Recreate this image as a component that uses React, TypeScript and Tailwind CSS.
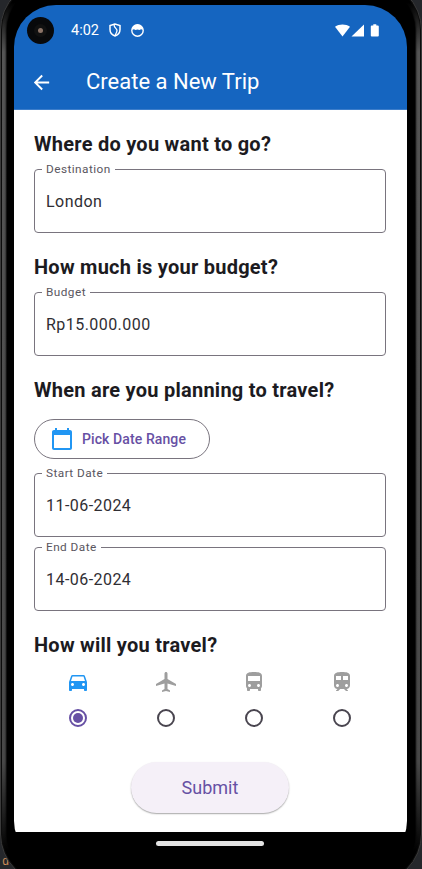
import React from "react";
import {
  MdArrowBack,
  MdCalendarToday,
  MdDirectionsBus,
  MdDirectionsCar,
  MdLocalAirport,
  MdTrain,
} from "react-icons/md";

function Heading({ children }: { children: React.ReactNode }) {
  return (
    <h2 className="h-[25px] text-[20px] leading-[25px] font-bold tracking-[0.25px] whitespace-nowrap text-[#1c1b1f]">
      {children}
    </h2>
  );
}

function Field({ label, value }: { label: string; value: string }) {
  return (
    <fieldset className="h-[71px] min-w-0 rounded-[4px] border border-[#79747e] pl-[7px]">
      <legend className="h-[14px] px-1 text-[11.8px] leading-[14px] tracking-[0.45px] text-[#5a5660]">
        {label}
      </legend>
      <div className="px-1 pt-[16px] text-[16px] leading-5 tracking-[0.45px] text-[#2f2e33]">{value}</div>
    </fieldset>
  );
}

function Radio({ checked }: { checked: boolean }) {
  return (
    <span
      className={
        "flex size-[18px] items-center justify-center rounded-full border-2 " +
        (checked ? "border-[#6750a4]" : "border-[#49454f]")
      }
    >
      {checked && <span className="size-[10px] rounded-full bg-[#6750a4]" />}
    </span>
  );
}

function StatusBar() {
  return (
    <div className="flex h-[50px] items-center pl-[13px]">
      <div className="flex size-[27px] items-center justify-center rounded-full bg-[#08090b]">
        <div className="flex size-[13px] items-center justify-center rounded-full bg-[#111]">
          <div className="size-[5px] rounded-full bg-[#8c7468]" />
        </div>
      </div>
      <span className="mt-[2px] ml-[17px] text-[14.5px] leading-5 text-white">4:02</span>
      <svg className="ml-[10px]" width="12" height="14" viewBox="0 0 12 14" fill="none" stroke="white" strokeWidth="1.5">
        <path d="M6 1 1 2.6v4C1 9.600 3 12 6 13c3-1 5-3.400 5-6.400v-4z" />
        <path d="M5 1.500C5 5 8 5.500 8 7.500c0 1.500-1 3-2 5" strokeWidth="1.300" />
      </svg>
      <svg className="ml-[10px]" width="13" height="13" viewBox="0 0 13 13">
        <circle cx="6.500" cy="6.500" r="5.700" fill="none" stroke="white" strokeWidth="1.400" />
        <path d="M1 5.800C1 2.500 3.500.7 6.500.7S12 2.500 12 5.800l-2-.6-1.500.9-2-.7-2 .7L3 5.200z" fill="white" />
      </svg>
      <svg className="ml-auto mr-[28px]" width="44" height="13" viewBox="0 0 44 13" fill="white">
        <path d="M0 2.800C4.200-.4 10.800-.4 15 2.800L7.500 12.500z" />
        <path d="M29 .5V12.500H16.500z" />
        <path d="M38.300.3h3v1.200h1.500q1 0 1 1v9q0 1-1 1h-6q-1 0-1-1v-9q0-1 1-1h1.500z" />
      </svg>
    </div>
  );
}

const modes = [
  { name: "Car", Icon: MdDirectionsCar },
  { name: "Plane", Icon: MdLocalAirport },
  { name: "Bus", Icon: MdDirectionsBus },
  { name: "Train", Icon: MdTrain },
];

export default function App() {
  return (
    <div className="relative h-[869px] w-[422px] overflow-hidden bg-[#25272b] font-['Roboto',sans-serif]">
      <span className="absolute bottom-0 left-[2px] font-['Liberation_Mono',monospace] text-[12px] leading-[14px] text-[#c98b57]">
        d
      </span>
      <div className="relative -mt-[20px] h-[904px] rounded-[50px] border border-[#3a3a3a] bg-[#0c0c0c] p-px">
        <div className="h-full rounded-[48px] bg-[linear-gradient(to_bottom,#000_20px,#555_70px,#484848_780px,#111_850px,#000_870px)] p-[5px]">
          <div className="h-full rounded-[43px] bg-black pt-[18px] pr-2 pl-[7px] shadow-[0_0_2px_1px_#000]">
            <div className="h-[858px] overflow-hidden rounded-[42px]">
              <header className="h-[105px] border-b border-[#3c7dca] bg-[#1565c0]">
                <StatusBar />
                <div className="flex h-[54px] items-center pl-[16px] text-white">
                  <MdArrowBack size={23} />
                  <h1 className="ml-[33px] text-[22px] leading-7">Create a New Trip</h1>
                </div>
              </header>
              <main className="h-[722px] bg-white pt-[22px] pr-[21px] pl-5">
                <Heading>Where do you want to go?</Heading>
                <div className="mt-[5px]">
                  <Field label="Destination" value="London" />
                </div>
                <div className="mt-[22px]">
                  <Heading>How much is your budget?</Heading>
                </div>
                <div className="mt-[5px]">
                  <Field label="Budget" value="Rp15.000.000" />
                </div>
                <div className="mt-[22px]">
                  <Heading>When are you planning to travel?</Heading>
                </div>
                <button className="mt-[16px] flex h-10 w-[176px] items-center rounded-full border border-[#79747e] pl-[15px] text-[14px] font-medium tracking-[0.1px] text-[#6750a4]">
                  <MdCalendarToday size={24} className="mr-2 text-[#2196f3]" />
                  Pick Date Range
                </button>
                <div className="mt-[7px] flex flex-col gap-[3px]">
                  <Field label="Start Date" value="11-06-2024" />
                  <Field label="End Date" value="14-06-2024" />
                </div>
                <div className="mt-[22px]">
                  <Heading>How will you travel?</Heading>
                </div>
                <div className="mt-[12px] grid grid-cols-4">
                  {modes.map(({ name, Icon }, i) => (
                    <label key={name} className="flex flex-col items-center gap-[15px]">
                      <Icon size={24} className={i === 0 ? "text-[#2196f3]" : "text-[#9e9e9e]"} />
                      <Radio checked={i === 0} />
                    </label>
                  ))}
                </div>
                <button className="mx-auto mt-[35px] block h-[51px] w-[158px] rounded-full bg-[#f5f0f8] text-[18px] text-[#6750a4] shadow-[0_1px_1.5px_rgba(0,0,0,0.35)]">
                  Submit
                </button>
              </main>
              <div className="flex h-[31px] justify-center bg-black pt-[9px] pr-px">
                <div className="h-[5px] w-[108px] rounded-sm bg-[#e3e3e3]" />
              </div>
            </div>
          </div>
        </div>
      </div>
    </div>
  );
}
